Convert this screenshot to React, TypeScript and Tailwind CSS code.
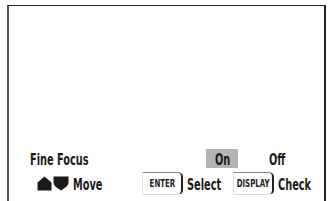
import React from 'react';

const font = { fontFamily: '"DejaVu Sans Condensed", "Liberation Sans", sans-serif' };

// Condensed label: squeezes the face horizontally to match the narrow OSD type
const Narrow: React.FC<{ children: React.ReactNode; width: string }> = ({ children, width }) => (
  <span className={`inline-block overflow-visible whitespace-nowrap ${width}`}>
    <span className="inline-block origin-left scale-x-[0.68]">{children}</span>
  </span>
);

// Small key cap like the remote's buttons
const KeyCap: React.FC<{ label: string }> = ({ label }) => (
  <div className="flex h-[23px] w-[41px] items-center justify-center rounded-r-[5px] border-t border-b border-l border-r-2 border-t-[#8a8a8a] border-b-[#d8d8d8] border-l-[#e4e4e4] border-r-[#222]">
    <span className="inline-block scale-x-[0.78] whitespace-nowrap text-[10px] font-bold leading-none text-[#222]">{label}</span>
  </div>
);

const App: React.FC = () => {
  return (
    <div className="h-[201px] w-[331px] overflow-hidden bg-white" style={font}>
      <div className="ml-[7px] mt-[5px] h-[200px] w-[319px] border-l-2 border-r-2 border-t border-l-[#555] border-r-[#222] border-t-[#222] pt-[143px]">
        {/* setting row */}
        <div className="flex h-[19px] items-center text-[16px] font-bold leading-none text-[#1a1a1a]">
          <div className="w-[197px] pl-[21px] pt-[2px]">
            <Narrow width="w-[58px]">Fine Focus</Narrow>
          </div>
          <div className="flex h-[19px] w-[32px] items-center justify-center bg-[#b3b3b3] pl-[6px] pt-[2px]">
            <Narrow width="w-[20px]">On</Narrow>
          </div>
          <div className="ml-[31px] pt-[2px]">
            <Narrow width="w-[18px]">Off</Narrow>
          </div>
        </div>

        {/* button guide */}
        <div className="mt-[4px] flex h-[23px] items-center text-[16px] font-bold leading-none text-[#1a1a1a]">
          <div className="ml-[28px] flex items-center gap-[1px]">
            <svg width="15" height="15" viewBox="0 0 15 15">
              <path d="M7.5 0.5 L14.5 6.5 L14.5 14.5 L0.5 14.5 L0.5 6.5 Z" fill="#1a1a1a" />
            </svg>
            <svg width="16" height="15" viewBox="0 0 16 15">
              <path d="M0.5 0.5 L15.5 0.5 L15.5 7 Q15.5 10 8 14.5 Q0.5 10 0.5 7 Z" fill="#1a1a1a" />
            </svg>
          </div>
          <div className="ml-[4px] pt-[2px]">
            <Narrow width="w-[30px]">Move</Narrow>
          </div>
          <div className="ml-[39px]">
            <KeyCap label="ENTER" />
          </div>
          <div className="ml-[4px] pt-[2px]">
            <Narrow width="w-[33px]">Select</Narrow>
          </div>
          <div className="ml-[13px]">
            <KeyCap label="DISPLAY" />
          </div>
          <div className="ml-[4px] pt-[2px]">
            <Narrow width="w-[32px]">Check</Narrow>
          </div>
        </div>
      </div>
    </div>
  );
};

export default App;
